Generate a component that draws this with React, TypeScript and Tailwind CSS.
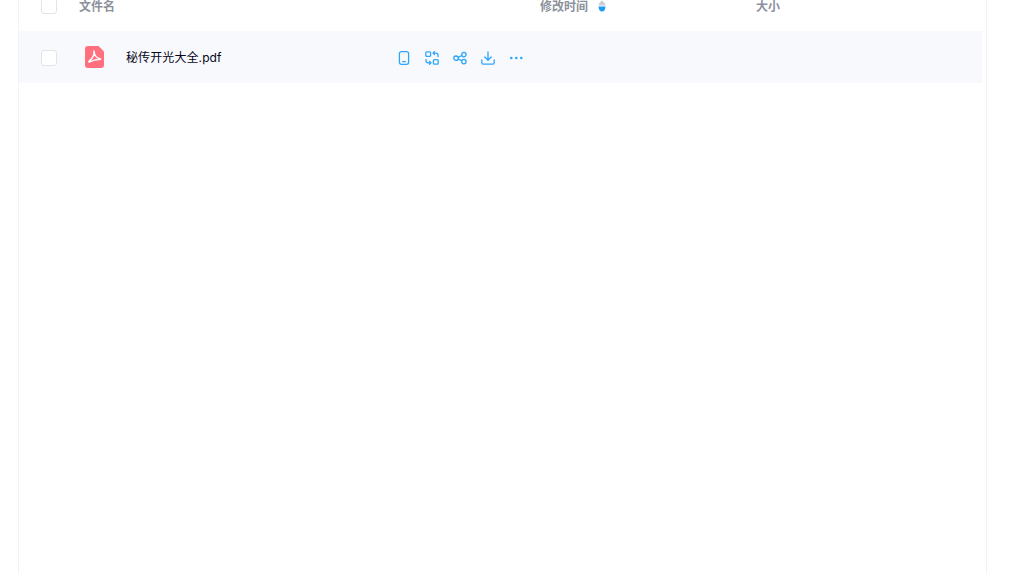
import React from "react";

const font = "font-['Inter','Noto_Sans_CJK_SC',sans-serif]";

const Checkbox = () => (
  <span className="block w-4 h-4 shrink-0 rounded-[3px] bg-white border border-[#e2e4e9]" />
);

const PhoneIcon = () => (
  <svg width="14" height="14" viewBox="0 0 14 14" fill="none" stroke="#2ea6fb" strokeWidth="1.3">
    <rect x="2.400" y="0.700" width="9.200" height="12.600" rx="2" />
    <path d="M5.600 10.600h2.800" strokeLinecap="round" />
  </svg>
);

const ConvertIcon = () => (
  <svg width="14" height="14" viewBox="0 0 14 14" fill="none" stroke="#2ea6fb" strokeWidth="1.3" strokeLinecap="round" strokeLinejoin="round">
    <rect x="0.800" y="0.800" width="4.800" height="4.600" rx="1" />
    <rect x="8.400" y="8.600" width="4.800" height="4.600" rx="1" />
    <path d="M9.400 0.700 8 2.100l1.400 1.400M8 2.100h3a2 2 0 0 1 2 2v1.500" />
    <path d="M4.600 13.300 6 11.900l-1.400-1.400M6 11.900H3a2 2 0 0 1-2-2V8.400" />
  </svg>
);

const ShareIcon = () => (
  <svg width="14" height="14" viewBox="0 0 14 14" fill="none" stroke="#2ea6fb" strokeWidth="1.3">
    <circle cx="3" cy="7.200" r="2.200" />
    <circle cx="10.900" cy="3.600" r="2.200" />
    <circle cx="10.900" cy="10.600" r="2.200" />
    <path d="M5 6.300 8.900 4.500M5 8.100 8.900 9.700" />
  </svg>
);

const DownloadIcon = () => (
  <svg width="14" height="14" viewBox="0 0 14 14" fill="none" stroke="#2ea6fb" strokeWidth="1.3" strokeLinecap="round" strokeLinejoin="round">
    <path d="M7 1v8M3.800 6 7 9.200 10.200 6" />
    <path d="M0.800 9v2.600a1.600 1.600 0 0 0 1.600 1.600h9.200a1.600 1.600 0 0 0 1.600-1.600V9" />
  </svg>
);

const MoreIcon = () => (
  <svg width="14" height="14" viewBox="0 0 14 14" fill="#2ea6fb">
    <circle cx="2.300" cy="7" r="1.300" />
    <circle cx="7.300" cy="7" r="1.300" />
    <circle cx="12.300" cy="7" r="1.300" />
  </svg>
);

const PdfIcon = () => (
  <svg width="19" height="22" viewBox="0 0 19 22">
    <path d="M3 0h10.500L19 5.500V19a3 3 0 0 1-3 3H3a3 3 0 0 1-3-3V3a3 3 0 0 1 3-3z" fill="#ff6f7d" />
    <path
      d="M9 5c.5 3-1.600 7.400-4.800 10.200-.6.600-.2 1 .5.700 3.100-1.600 7-2.700 10.100-2.400.9 0 1-.6.200-.8C11.800 12.100 9.200 9 9 5z"
      fill="none"
      stroke="#fff"
      strokeWidth="1.600"
      strokeLinejoin="round"
    />
  </svg>
);

const SortIcon = () => (
  <svg width="8" height="12" viewBox="0 0 8 12">
    <path d="M4 0.500C5.500 1.500 7.500 3.500 7.500 5.500H.500C.500 3.500 2.500 1.500 4 .500z" fill="#c9ced6" />
    <path d="M.500 6.500h7C7.500 9.500 6 11.500 4 11.500S.500 9.500.500 6.500z" fill="#1d9bf5" />
  </svg>
);

export default function App() {
  return (
    <div className={`w-[1024px] h-[574px] overflow-hidden bg-white ${font}`}>
      <div className="ml-[18px] w-[969px] h-[600px] -mt-[19px] border-x border-[#f3f3f5]">
        {/* Table head */}
        <div className="flex items-center h-[50px] text-xs leading-none font-semibold text-[#8c919c]">
          <div className="w-[60px] pl-[22px] flex">
            <Checkbox />
          </div>
          <span className="w-[461px] pt-0.5">文件名</span>
          <div className="w-[216px] flex items-center gap-[10px]">
            <span className="pt-0.5">修改时间</span>
            <SortIcon />
          </div>
          <span className="pt-0.5">大小</span>
        </div>

        {/* File row */}
        <div className="flex items-center w-[963px] h-[52px] bg-[#f7f9fc]">
          <div className="w-[66px] pl-[22px] flex pt-px">
            <Checkbox />
          </div>
          <div className="w-[41px]">
            <PdfIcon />
          </div>
          <span className="w-[271px] pt-px text-xs leading-none tracking-[0.1px] text-[#06051a]">秘传开光大全.pdf</span>
          <div className="flex items-center gap-[14px] pt-px">
            <PhoneIcon />
            <ConvertIcon />
            <ShareIcon />
            <DownloadIcon />
            <MoreIcon />
          </div>
        </div>
      </div>
    </div>
  );
}
